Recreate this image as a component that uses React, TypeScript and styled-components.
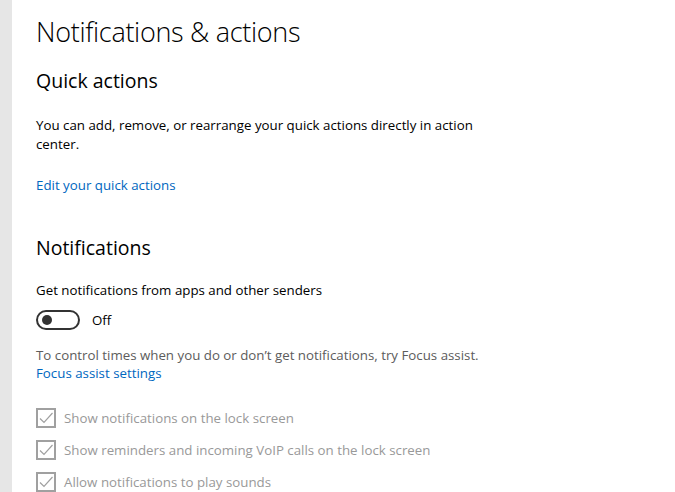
import styled, { createGlobalStyle } from 'styled-components'

const Global = createGlobalStyle`
  html, body {
    margin: 0;
    padding: 0;
    background: #ffffff;
    font-family: "Open Sans", "Noto Sans", sans-serif;
    color: #000000;
    overflow: hidden;
  }
`

const Page = styled.div`
  display: flex;
  width: 675px;
  height: 492px;
  overflow: hidden;
`

const Rail = styled.div`
  width: 12px;
  flex-shrink: 0;
  background: #e6e6e6;
`

const Content = styled.main`
  flex: 1;
  padding: 13px 0 0 24px;
  display: flex;
  flex-direction: column;
`

const Title = styled.h1`
  margin: 0;
  font-size: 27px;
  font-weight: 300;
  line-height: 38px;
  letter-spacing: -0.3px;
`

const SectionTitle = styled.h2`
  margin: 0;
  font-size: 19.5px;
  font-weight: 400;
  line-height: 28px;
`

const Text = styled.p<{ $muted?: boolean }>`
  margin: 0;
  font-size: 13.3px;
  line-height: 18.5px;
  color: ${p => (p.$muted ? '#5c5c5c' : '#000000')};
  max-width: 450px;
`

const Link = styled.a`
  font-size: 13.3px;
  line-height: 19px;
  color: #0067c0;
  text-decoration: none;
  cursor: pointer;
`

const Spacer = styled.div<{ $h: number }>`
  height: ${p => p.$h}px;
  flex-shrink: 0;
`

const ToggleRow = styled.div`
  display: flex;
  align-items: center;
  gap: 12px;
  height: 22px;
`

const Track = styled.div`
  width: 36px;
  height: 16px;
  border: 2px solid #333333;
  border-radius: 10px;
  display: flex;
  align-items: center;
  padding-left: 4px;
  box-sizing: content-box;
`

const Knob = styled.div`
  width: 10px;
  height: 10px;
  border-radius: 50%;
  background: #333333;
`

const ToggleLabel = styled.span`
  font-size: 13.3px;
`

const CheckList = styled.div`
  display: flex;
  flex-direction: column;
  gap: 12px;
`

const CheckRow = styled.label`
  display: flex;
  align-items: center;
  gap: 8px;
  height: 20px;
  font-size: 13.3px;
  color: #999999;
`

const Box = styled.span`
  width: 16px;
  height: 16px;
  border: 2px solid #a0a0a0;
  display: flex;
  align-items: center;
  justify-content: center;
`

const Check = () => (
  <svg width="16" height="16" viewBox="0 0 16 16">
    <path d="M2 8.5 L6 12.5 L14.5 3" fill="none" stroke="#a0a0a0" strokeWidth="1.2" />
  </svg>
)

const checks = [
  'Show notifications on the lock screen',
  'Show reminders and incoming VoIP calls on the lock screen',
  'Allow notifications to play sounds',
]

export default function App() {
  return (
    <Page>
      <Global />
      <Rail />
      <Content>
        <Title>Notifications &amp; actions</Title>
        <Spacer $h={16} />
        <SectionTitle>Quick actions</SectionTitle>
        <Spacer $h={21} />
        <Text>
          You can add, remove, or rearrange your quick actions directly in action center.
        </Text>
        <Spacer $h={23} />
        <Link>Edit your quick actions</Link>
        <Spacer $h={39} />
        <SectionTitle>Notifications</SectionTitle>
        <Spacer $h={19} />
        <Text>Get notifications from apps and other senders</Text>
        <Spacer $h={9} />
        <ToggleRow>
          <Track>
            <Knob />
          </Track>
          <ToggleLabel>Off</ToggleLabel>
        </ToggleRow>
        <Spacer $h={15} />
        <Text $muted>
          To control times when you do or don’t get notifications, try Focus assist.
        </Text>
        <Link>Focus assist settings</Link>
        <Spacer $h={25} />
        <CheckList>
          {checks.map(c => (
            <CheckRow key={c}>
              <Box>
                <Check />
              </Box>
              {c}
            </CheckRow>
          ))}
        </CheckList>
      </Content>
    </Page>
  )
}
